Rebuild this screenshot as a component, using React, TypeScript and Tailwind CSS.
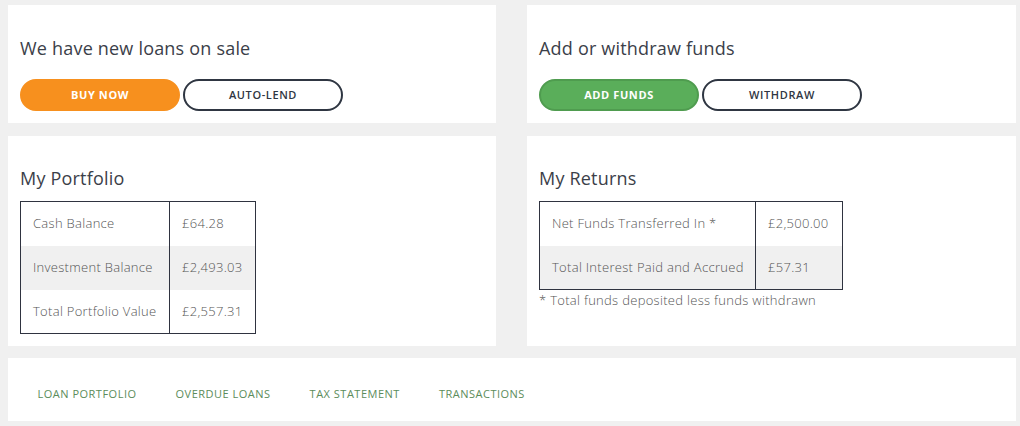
import type { ReactNode } from 'react';

const font = { fontFamily: '"Open Sans", "Noto Sans", sans-serif' };

interface CardProps {
  children: ReactNode;
  className?: string;
}

const Card = ({ children, className = '' }: CardProps) => {
  return <div className={`bg-white ${className}`}>{children}</div>;
};

const Heading = ({ children }: { children: ReactNode }) => {
  return (
    <h2 className="text-[18px] leading-[26px] font-normal tracking-[0.2px] text-[#3b4049]">
      {children}
    </h2>
  );
};

interface PillProps {
  label: string;
  variant: 'orange' | 'green' | 'outline';
}

const Pill = ({ label, variant }: PillProps) => {
  const styles = {
    orange: 'bg-[#f7901e] border-[#f7901e] text-white font-bold',
    green: 'bg-[#5aae5a] border-[#4f9c4f] text-white font-bold',
    outline: 'bg-white border-[#2f3642] text-[#2f3642] font-semibold',
  }[variant];
  return (
    <button
      className={`flex h-8 w-40 items-center justify-center rounded-full border-2 text-[11px] tracking-[0.6px] ${styles}`}
    >
      {label}
    </button>
  );
};

interface Row {
  label: string;
  value: string;
}

interface StatTableProps {
  rows: Row[];
  labelWidth: string;
  valueWidth: string;
}

const StatTable = ({ rows, labelWidth, valueWidth }: StatTableProps) => {
  return (
    <table className="border-collapse border border-[#2f3340] text-[13px] font-light tracking-[0.3px] text-[#555]">
      <tbody>
        {rows.map((row, i) => (
          <tr key={row.label} className={i % 2 === 1 ? 'bg-[#f0f0f0]' : 'bg-white'}>
            <td className={`${labelWidth} h-[44px] border-r border-[#2f3340] pl-3`}>
              {row.label}
            </td>
            <td className={`${valueWidth} h-[44px] pl-3`}>{row.value}</td>
          </tr>
        ))}
      </tbody>
    </table>
  );
};

const navLinks = ['Loan Portfolio', 'Overdue Loans', 'Tax Statement', 'Transactions'];

export default function App() {
  return (
    <div className="min-h-[426px] bg-[#f0f0f0] pt-[5px] pr-[4px] pb-[5px] pl-[8px]" style={font}>
      <div className="grid grid-cols-[488px_489px] gap-x-[31px] gap-y-[13px]">
        <Card className="h-[118px] px-3 pt-[30px]">
          <Heading>We have new loans on sale</Heading>
          <div className="mt-[18px] flex gap-[3px]">
            <Pill label="BUY NOW" variant="orange" />
            <Pill label="AUTO-LEND" variant="outline" />
          </div>
        </Card>
        <Card className="h-[118px] px-3 pt-[30px]">
          <Heading>Add or withdraw funds</Heading>
          <div className="mt-[18px] flex gap-[3px]">
            <Pill label="ADD FUNDS" variant="green" />
            <Pill label="WITHDRAW" variant="outline" />
          </div>
        </Card>

        <Card className="h-[210px] px-3 pt-[29px]">
          <Heading>My Portfolio</Heading>
          <div className="mt-[10px]">
            <StatTable
              labelWidth="w-[149px]"
              valueWidth="w-[86px]"
              rows={[
                { label: 'Cash Balance', value: '£64.28' },
                { label: 'Investment Balance', value: '£2,493.03' },
                { label: 'Total Portfolio Value', value: '£2,557.31' },
              ]}
            />
          </div>
        </Card>
        <Card className="h-[210px] px-3 pt-[29px]">
          <Heading>My Returns</Heading>
          <div className="mt-[10px]">
            <StatTable
              labelWidth="w-[216px]"
              valueWidth="w-[87px]"
              rows={[
                { label: 'Net Funds Transferred In *', value: '£2,500.00' },
                { label: 'Total Interest Paid and Accrued', value: '£57.31' },
              ]}
            />
            <p className="text-[13px] leading-[20px] font-light tracking-[0.3px] text-[#555]">
              * Total funds deposited less funds withdrawn
            </p>
          </div>
        </Card>
      </div>

      <Card className="mt-[12px] h-[63px] px-[10px] pt-[28px]">
        <ul className="flex items-center">
          {navLinks.map((link) => (
            <li key={link}>
              <a
                href="#"
                className="block px-[19.5px] text-[11px] leading-[16px] uppercase tracking-[0.5px] text-[#5b8c5a]"
              >
                {link}
              </a>
            </li>
          ))}
        </ul>
      </Card>
    </div>
  );
}
